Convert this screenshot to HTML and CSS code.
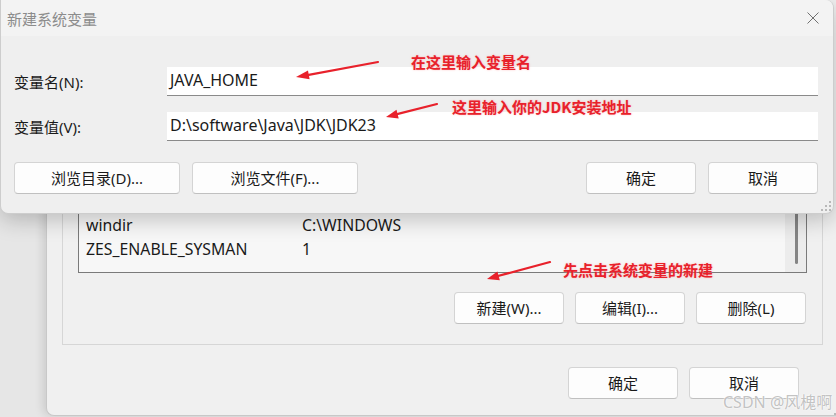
FILE: index.html
```html
<!DOCTYPE html>
<html lang="zh-CN">
<head>
  <meta charset="UTF-8" />
  <title>新建系统变量</title>
  <link rel="stylesheet" href="styles.css">
</head>
<body>

<!-- background window: 环境变量 -->
<div class="env-window">
  <div class="group">
    <div class="listbox">
      <div class="rows">
        <div class="row"><span class="name">TMP</span><span class="value">C:\WINDOWS\TEMP</span></div>
        <div class="row"><span class="name">USERNAME</span><span class="value">SYSTEM</span></div>
        <div class="row"><span class="name">windir</span><span class="value">C:\WINDOWS</span></div>
        <div class="row"><span class="name">ZES_ENABLE_SYSMAN</span><span class="value">1</span></div>
      </div>
      <div class="scrollbar"><div class="thumb"></div></div>
    </div>
    <div class="group-buttons">
      <button class="btn">新建(W)...</button>
      <button class="btn">编辑(I)...</button>
      <button class="btn">删除(L)</button>
    </div>
  </div>
  <div class="window-buttons">
    <button class="btn">确定</button>
    <button class="btn">取消</button>
  </div>
  <svg class="grip" width="12" height="12" viewBox="0 0 12 12">
    <rect x="9" y="1" width="2" height="2" /><rect x="5" y="5" width="2" height="2" /><rect x="9" y="5" width="2" height="2" />
    <rect x="1" y="9" width="2" height="2" /><rect x="5" y="9" width="2" height="2" /><rect x="9" y="9" width="2" height="2" />
  </svg>
</div>

<!-- foreground dialog -->
<div class="dialog">
  <div class="titlebar">
    <span class="title">新建系统变量</span>
    <svg class="close" width="12" height="12" viewBox="0 0 12 12">
      <path d="M0.5 0.5 L11.5 11.5 M11.5 0.5 L0.5 11.5" />
    </svg>
  </div>
  <div class="dialog-body">
    <div class="fields">
      <label>变量名(N):</label>
      <div class="input">JAVA_HOME</div>
      <label>变量值(V):</label>
      <div class="input">D:\software\Java\JDK\JDK23</div>
    </div>
    <div class="dialog-buttons">
      <div class="btn-group">
        <button class="btn wide">浏览目录(D)...</button>
        <button class="btn wide">浏览文件(F)...</button>
      </div>
      <div class="btn-group">
        <button class="btn">确定</button>
        <button class="btn">取消</button>
      </div>
    </div>
  </div>
  <svg class="grip" width="12" height="12" viewBox="0 0 12 12">
    <rect x="9" y="1" width="2" height="2" /><rect x="5" y="5" width="2" height="2" /><rect x="9" y="5" width="2" height="2" />
    <rect x="1" y="9" width="2" height="2" /><rect x="5" y="9" width="2" height="2" /><rect x="9" y="9" width="2" height="2" />
  </svg>
</div>

<!-- red annotations -->
<svg class="marks" width="836" height="417" viewBox="0 0 836 417">
  <line x1="378" y1="62" x2="306" y2="75.3" />
  <polygon points="296,77 308,70.4 309.6,79.2" />
  <line x1="437" y1="104" x2="395" y2="114.6" />
  <polygon points="386,117 396.5,109.7 398.7,118.4" />
  <line x1="550" y1="262" x2="496" y2="276.5" />
  <polygon points="487,279 497.4,271.6 499.8,280.2" />
</svg>
<span class="note note-name">在这里输入变量名</span>
<span class="note note-value">这里输入你的JDK安装地址</span>
<span class="note note-new">先点击系统变量的新建</span>

<span class="watermark">CSDN @风槐啊</span>

</body>
</html>
```

FILE: styles.css
```css
/* Reset */
* {
  margin: 0;
  padding: 0;
  box-sizing: border-box;
}
html, body {
  width: 836px;
  height: 417px;
  overflow: hidden;
}
body {
  position: relative;
  background: #e6e6e6;
  font-family: "Noto Sans", "Noto Sans CJK SC", sans-serif;
  font-size: 15px;
  color: #1a1a1a;
}
button {
  font: inherit;
  color: inherit;
}
.btn {
  width: 110px;
  height: 32px;
  background: #fdfdfd;
  border: 1px solid #d4d4d4;
  border-bottom-color: #c0c0c0;
  border-radius: 4px;
  line-height: 28px;
  text-align: center;
}
.btn.wide {
  width: 166px;
}
.grip {
  position: absolute;
  right: 1px;
  bottom: 1px;
  fill: #b8b8b8;
}

/* Background window */
.env-window {
  position: absolute;
  left: 46px;
  top: 0;
  width: 800px;
  height: 416px;
  padding: 150px 0 0 15px;
  background: #f0f0f0;
  border-left: 1px solid #c8c8c8;
  border-bottom: 1px solid #c8c8c8;
  border-bottom-left-radius: 8px;
  box-shadow: -3px 0 10px rgba(0, 0, 0, 0.12);
  display: flex;
  flex-direction: column;
}
.env-window .grip {
  right: 1px;
  bottom: -1px;
}
.group {
  width: 761px;
  height: 195px;
  border: 1px solid #d6d6d6;
  padding: 14px 15px 0;
  display: flex;
  flex-direction: column;
}
.listbox {
  height: 108px;
  border: 1px solid #7a7a7a;
  border-top: none;
  background: #f7f7f7;
  display: flex;
}
.rows {
  flex: 1;
  overflow: hidden;
  display: flex;
  flex-direction: column;
  justify-content: flex-end;
  padding: 0 0 11px 7px;
  font-size: 15.8px;
}
.row {
  height: 24px;
  line-height: 24px;
  display: flex;
  white-space: nowrap;
}
.row .name {
  width: 216px;
}
.scrollbar {
  width: 21px;
  background: #ececec;
  display: flex;
  justify-content: center;
}
.thumb {
  width: 3px;
  height: 99px;
  margin-left: 1px;
  background: #858585;
  border-radius: 2px;
}
.group-buttons {
  margin-top: 19px;
  display: flex;
  justify-content: flex-end;
  gap: 11px;
  padding-right: 1px;
}
.window-buttons {
  width: 761px;
  margin-top: 22px;
  padding-right: 24px;
  display: flex;
  justify-content: flex-end;
  gap: 11px;
}

/* Foreground dialog */
.dialog {
  position: absolute;
  left: 0;
  top: 0;
  width: 834px;
  height: 214px;
  background: #efefef;
  border: 1px solid #cdcdcd;
  border-top: none;
  border-radius: 0 8px 8px 8px;
  box-shadow: 0 6px 22px rgba(0, 0, 0, 0.22);
}
.titlebar {
  height: 36px;
  background: #f3f3f3;
  border-top-right-radius: 8px;
  padding: 0 14px 0 6px;
  display: flex;
  align-items: center;
  justify-content: space-between;
}
.title {
  color: #8c8c8c;
  font-size: 15px;
}
.close {
  fill: none;
  stroke: #707070;
  stroke-width: 1;
}
.dialog-body {
  padding: 31px 15px 0 13px;
}
.fields {
  display: grid;
  grid-template-columns: 153px 1fr;
  row-gap: 16px;
  align-items: center;
}
.input {
  height: 29px;
  background: #fff;
  border-bottom: 1px solid #8a8a8a;
  padding: 0 3px;
  line-height: 27px;
  font-size: 16px;
}
.dialog-buttons {
  margin-top: 21px;
  display: flex;
  justify-content: space-between;
}
.btn-group {
  display: flex;
  gap: 12px;
}

/* Annotations */
.marks {
  position: absolute;
  left: 0;
  top: 0;
  pointer-events: none;
}
.marks line {
  stroke: #e8212b;
  stroke-width: 2.2;
  stroke-linecap: round;
}
.marks polygon {
  fill: #e8212b;
}
.note {
  position: absolute;
  font-family: "Noto Sans CJK SC", sans-serif;
  font-weight: 700;
  font-size: 15px;
  line-height: 20px;
  color: #e8212b;
  text-shadow: 0 0 2px rgba(255, 140, 140, 0.6);
  white-space: nowrap;
}
.note-name {
  left: 411px;
  top: 52px;
}
.note-value {
  left: 452px;
  top: 97px;
}
.note-new {
  left: 563px;
  top: 260px;
}
.watermark {
  position: absolute;
  left: 723px;
  top: 392px;
  font-size: 16px;
  line-height: 20px;
  color: rgba(160, 160, 160, 0.65);
  text-shadow: 0 0 1px #fff, 0 0 2px #fff;
  white-space: nowrap;
}
```
